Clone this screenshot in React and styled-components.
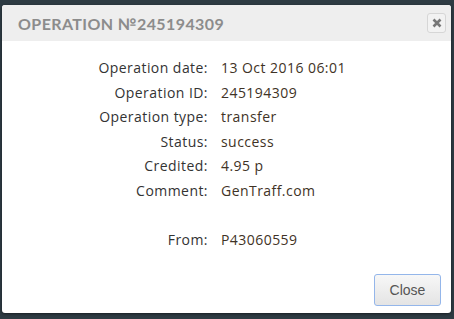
import React from "react";
import styled, { createGlobalStyle } from "styled-components";

const Global = createGlobalStyle`
  html, body { margin: 0; padding: 0; background: #2e3b43; }
  body { width: 454px; height: 319px; overflow: hidden; }
`;

const Dialog = styled.div`
  margin: 5px 0 0 2px;
  width: 449px;
  height: 308px;
  background: #ffffff;
  border-radius: 3px;
  box-shadow: 0 1px 3px rgba(0,0,0,0.5);
  display: flex;
  flex-direction: column;
  overflow: hidden;
`;

const Header = styled.div`
  height: 36px;
  background: #eeeeee;
  display: flex;
  align-items: center;
  justify-content: space-between;
  padding: 0 5px 0 16px;
  box-sizing: border-box;
`;

const Title = styled.h1`
  margin: 0;
  font-family: Lato, "Liberation Sans", sans-serif;
  font-size: 16px;
  font-weight: 700;
  letter-spacing: 0.4px;
  color: #8c8c8c;
  text-transform: uppercase;
`;

const CloseX = styled.button`
  width: 19px;
  height: 20px;
  padding: 0;
  border: 1px solid #d6d6d6;
  border-radius: 3px;
  background: #f2f2f2;
  display: flex;
  align-items: center;
  justify-content: center;
`;

const Body = styled.div`
  flex: 1;
  display: grid;
  grid-template-columns: 206px 1fr;
  column-gap: 13px;
  align-content: start;
  padding-top: 15px;
  font-family: "Open Sans", sans-serif;
  font-size: 14px;
  letter-spacing: 0.45px;
  line-height: 24.6px;
`;

const Label = styled.div`
  text-align: right;
  color: #333333;
  min-height: 24.6px;
`;

const Value = styled.div`
  color: #3f3326;
  min-height: 24.6px;
`;

const Footer = styled.div`
  display: flex;
  justify-content: flex-end;
  padding: 0 10px 7px 0;
`;

const Button = styled.button`
  width: 67px;
  height: 32px;
  border: 1px solid #94b6ea;
  border-radius: 3px;
  background: linear-gradient(#f7f7f7, #e4e4e4);
  font-family: "Liberation Sans", Arial, sans-serif;
  font-size: 14px;
  color: #555555;
  padding: 0;
`;

const rows = [
  ["Operation date:", "13 Oct 2016 06:01"],
  ["Operation ID:", "245194309"],
  ["Operation type:", "transfer"],
  ["Status:", "success"],
  ["Credited:", "4.95 р"],
  ["Comment:", "GenTraff.com"],
  ["", ""],
  ["From:", "P43060559"],
];

export default function App() {
  return (
    <>
      <Global />
      <Dialog>
        <Header>
          <Title>Operation №245194309</Title>
          <CloseX aria-label="close">
            <svg width="10" height="10" viewBox="0 0 10 10">
              <path d="M1.5 1.5 L8.5 8.5 M8.5 1.5 L1.5 8.5" stroke="#777777" strokeWidth="2.6" />
            </svg>
          </CloseX>
        </Header>
        <Body>
          {rows.map(([l, v], i) => (
            <React.Fragment key={i}>
              <Label>{l}</Label>
              <Value>{v}</Value>
            </React.Fragment>
          ))}
        </Body>
        <Footer>
          <Button>Close</Button>
        </Footer>
      </Dialog>
    </>
  );
}
